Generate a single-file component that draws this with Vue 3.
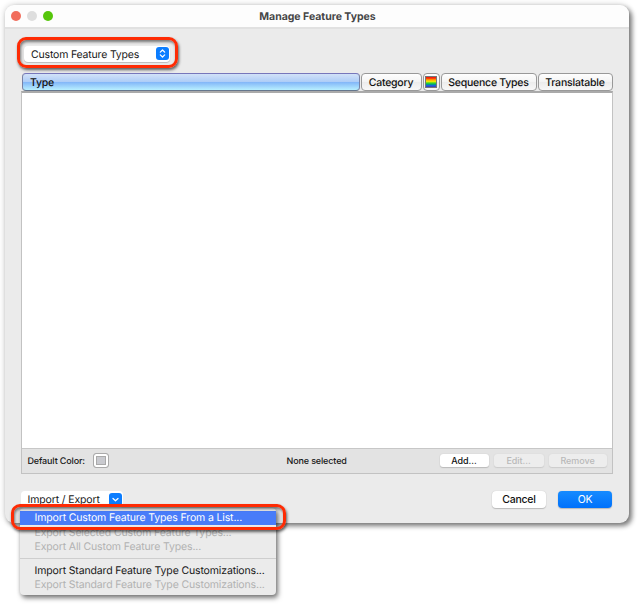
<script setup>
const columns = [
  { label: 'Type', cls: 'type' },
  { label: 'Category', cls: 'category' },
  { label: '', cls: 'color' },
  { label: 'Sequence Types', cls: 'sequence' },
  { label: 'Translatable', cls: 'translatable' },
]
</script>

<template>
  <div class="stage">
    <main class="window">
      <header class="titlebar">
        <i class="light red"></i><i class="light gray"></i><i class="light green"></i>
        <h1><span>Manage Feature Types</span></h1>
      </header>
      <section class="content">
        <div class="filter">
          <span class="filter-text">Custom Feature Types</span>
          <svg class="stepper" viewBox="0 0 13 13">
            <path d="M4.3 5.1 6.5 3 8.7 5.1M4.3 7.9 6.5 10 8.7 7.9" />
          </svg>
          <div class="callout filter-callout"></div>
        </div>
        <div class="columns">
          <div v-for="c in columns" :key="c.cls" class="column" :class="c.cls">
            <span v-if="c.label">{{ c.label }}</span>
            <i v-else class="rainbow"></i>
          </div>
        </div>
        <div class="table">
          <div class="rows"></div>
          <footer class="tablebar">
            <span class="default">Default Color:</span>
            <i class="swatch"></i>
            <span class="none">None selected</span>
            <div class="actions">
              <button class="add"><span>Add...</span></button>
              <button class="edit" disabled><span>Edit...</span></button>
              <button class="remove" disabled><span>Remove</span></button>
            </div>
          </footer>
        </div>
        <div class="bottom">
          <div class="import">
            <span>Import / Export</span>
            <svg viewBox="0 0 13 13"><path d="M4 5.5 6.5 7.8 9 5.5" /></svg>
          </div>
          <div class="dialog-buttons">
            <button class="cancel"><span>Cancel</span></button>
            <button class="ok"><span>OK</span></button>
          </div>
        </div>
      </section>
    </main>
    <nav class="menu">
      <div class="item active"><span>Import Custom Feature Types From a List...</span></div>
      <div class="item off"><span>Export Selected Custom Feature Types...</span></div>
      <div class="item off"><span>Export All Custom Feature Types...</span></div>
      <hr />
      <div class="item"><span>Import Standard Feature Type Customizations...</span></div>
      <div class="item off"><span>Export Standard Feature Type Customizations...</span></div>
    </nav>
    <div class="callout menu-callout"></div>
  </div>
</template>

<style>
body { margin: 0; background: #fff; }
</style>

<style scoped>
* { box-sizing: border-box; }
.stage {
  position: relative; width: 640px; height: 606px; overflow: hidden; padding: 5px;
  background: #fff; color: #181818; font: 10.5px/14px Inter, "Liberation Sans", sans-serif; white-space: nowrap;
  letter-spacing: -.14px; text-rendering: geometricPrecision;
}
.window {
  width: 624px; height: 518px; border-radius: 9px; background: #ebebeb;
  box-shadow: 3px 3px 5px rgba(0,0,0,.48), 0 0 6px rgba(0,0,0,.2);
}
.titlebar {
  display: flex; align-items: center; height: 24px; padding: 0 6px; gap: 6px;
  background: #fdfdfd; border-bottom: 2px solid #e1e1e1; border-radius: 9px 9px 0 0;
}
.light { width: 10px; height: 10px; border-radius: 50%; flex: none; }
.red { background: #f16d5c; }
.gray { background: #dedede; }
.green { background: #56c60b; }
h1 { flex: 1; margin: 0 47px 0 0; padding-top: 2px; text-align: center; font-size: 10.5px; font-weight: 700; line-height: 20px; color: #464646; letter-spacing: -.02px; }
.content { padding: 17px 17px 0 16px; }
.filter {
  position: relative; display: flex; align-items: center; width: 146px; height: 16px; margin-left: 3px;
  padding: 0 1px 0 7px; background: #fff; border-radius: 4px; box-shadow: 0 1px 1px #bbb;
}
.filter-text { flex: 1; letter-spacing: -.18px; padding-top: 1px; }
.stepper { width: 13px; height: 13px; border-radius: 3px; background: #0b7dff; margin-bottom: 1px; }
svg path { fill: none; stroke: #fff; stroke-width: 1.25; stroke-linecap: round; stroke-linejoin: round; }
.callout {
  position: absolute; border: 3px solid #fe2b04; border-radius: 9px;
  box-shadow: 1px 2px 3px rgba(0,0,0,.6), inset 1px 2px 3px rgba(0,0,0,.5); pointer-events: none;
}
.filter-callout { left: -7px; top: -9px; width: 161px; height: 31px; }
.columns { display: flex; gap: 1px; height: 18px; margin-top: 11px; padding-left: .5px; }
.column {
  display: flex; align-items: center; justify-content: center; height: 18px; color: #111; flex: none;
  border: 1px solid #999; border-radius: 4px; font-weight: 500; letter-spacing: -.25px;
  background: linear-gradient(#fefefe, #f4f4f4 48%, #ececec 52%, #f8f8f8);
}
.column span { padding-top: 2px; }
.type {
  width: 338px; justify-content: flex-start; padding-left: 7.5px; border-color: #7777bb #7881a4 #66778d;
  background: linear-gradient(#d2e2f8, #aecdf7 48%, #83b7f8 52%, #b8f0ff);
}
.category { width: 61px; }
.color { width: 17px; }
.sequence { width: 96px; }
.translatable { width: 75px; letter-spacing: -.17px; }
.rainbow {
  flex: none; width: 12px; height: 12px; border: 1px solid #777;
  background: linear-gradient(#f5200d 0 10%, #ff8b00 25%, #ffe600 43%, #3bdb25 60%, #00ad6b 72%, #1768db 84%, #4634b5);
}
.table { height: 383px; width: 591.5px; border: 1px solid #c2c2c2; border-top: 2px solid #aaa; background: #fff; }
.rows { height: 355px; }
.tablebar {
  display: flex; align-items: center; height: 25px; border-top: 1px solid #c7c7c7;
  background: #e3e3e3; padding: 0 5px; font-size: 9px; font-weight: 500;
}
.default { width: 58px; padding: 1px 0 0 .5px; }
.swatch {
  width: 16px; height: 15px; margin: 0 0 1px 8px; border: 1px solid #aaa; border-radius: 3px;
  background: #c9cacf; box-shadow: inset 0 0 0 2px #fff, inset 0 0 0 3px #aaa;
}
.none { margin-left: 177.5px; padding-top: 2px; }
.actions { display: flex; gap: 5px; margin: 0 0 1px auto; }
button {
  display: flex; align-items: center; justify-content: center; padding: 0; border: 0; color: #111;
  background: #fff; font: 500 9px/13px Inter, sans-serif; height: 13px; border-radius: 3px;
  letter-spacing: -.05px; box-shadow: 0 0 1px #bbb, 0 1px 1px #bbb;
}
button:disabled { color: #b9b9b9; background: #ededed; box-shadow: 0 0 1px #ccc, 0 1px 1px #ccc; }
.add { width: 49px; }
.edit { width: 50px; }
.remove { width: 58px; }
.bottom { display: flex; justify-content: space-between; padding-top: 17px; }
.import {
  display: flex; align-items: center; width: 101.5px; height: 17px; padding: 0 1px 0 6.5px; background: #fff; border-radius: 4px;
}
.import span { flex: 1; padding-top: 1px; }
.import svg { width: 13px; height: 13px; background: #0b7dff; border-radius: 3px; }
.dialog-buttons { display: flex; gap: 12px; }
.dialog-buttons button { width: 54px; height: 17px; border-radius: 4px; font-size: 10.5px; letter-spacing: -.25px; }
.dialog-buttons .ok { color: #fff; background: linear-gradient(#168bff, #0071fb); font-weight: 400; }
.menu {
  position: absolute; left: 20px; top: 508px; width: 256px; height: 87px; padding-top: 3px;
  background: #ebebeb; border-radius: 4px; box-shadow: 2px 3px 5px rgba(0,0,0,.5), 0 0 4px rgba(0,0,0,.18);
}
.item { height: 14px; line-height: 15px; padding-left: 14.5px; }
.active { background: #487cf9; color: #fff; line-height: 13px; }
.off { color: #b2b2b2; }
hr { height: 1px; margin: 5px 0 4px; border: 0; background: #cecece; }
.menu-callout { left: 11px; top: 504px; width: 275px; height: 26px; }
</style>
